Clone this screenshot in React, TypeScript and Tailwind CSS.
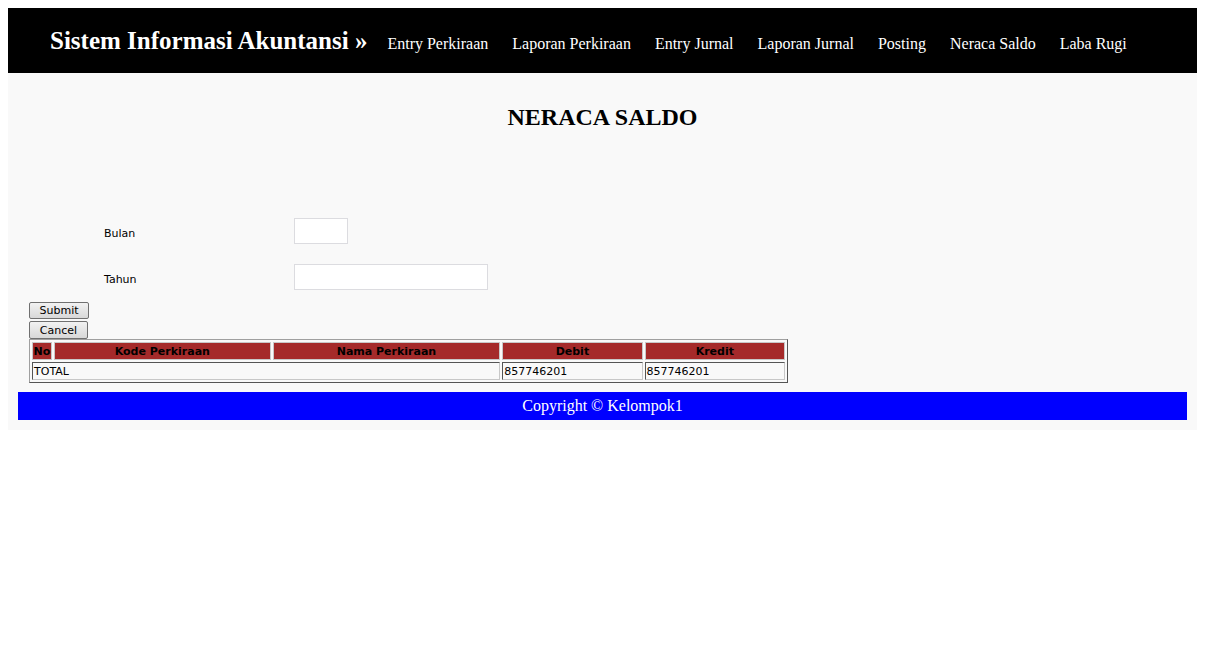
import React from "react";

const nav = ["Entry Perkiraan", "Laporan Perkiraan", "Entry Jurnal", "Laporan Jurnal", "Posting", "Neraca Saldo", "Laba Rugi"];

export default function App() {
  return (
    <div className="bg-white min-h-[654px] p-2" style={{ fontFamily: '"Liberation Serif", serif' }}>
      <div className="bg-[#f9f9f9] pb-[10px]">
        <div className="bg-black h-[65px] flex items-center pl-[42px]">
          <span className="text-white font-bold text-[25px] leading-none mr-2 -mt-[1px]">Sistem Informasi Akuntansi »</span>
          <div className="flex mt-[6px]">
            {nav.map((n) => (
              <span key={n} className="text-white text-[16px] px-3">{n}</span>
            ))}
          </div>
        </div>
        <h1 className="text-center font-bold text-[24px] leading-none pt-[32px] text-black">NERACA SALDO</h1>
        <div className="mt-[89px] text-[11px] text-black" style={{ fontFamily: '"DejaVu Sans", Verdana, sans-serif' }}>
          <div className="flex items-center h-[26px] pl-[96px]">
            <span className="w-[190px] mt-[6px]">Bulan</span>
            <div className="w-[54px] h-[26px] bg-white border border-[#dcdce0]" />
          </div>
          <div className="flex items-center h-[26px] pl-[96px] mt-[20px]">
            <span className="w-[190px] mt-[6px]">Tahun</span>
            <div className="w-[194px] h-[26px] bg-white border border-[#dcdce0]" />
          </div>
          <div className="pl-[21px] mt-[12px] flex flex-col gap-[2px]">
            <button className="w-[60px] h-[17px] border border-[#707070] rounded-[2px] bg-gradient-to-b from-[#f2f2f2] to-[#d8d8d8] text-[11px] leading-none">Submit</button>
            <button className="w-[59px] h-[18px] border border-[#707070] rounded-[2px] bg-gradient-to-b from-[#f2f2f2] to-[#d8d8d8] text-[11px] leading-none">Cancel</button>
          </div>
          <div className="pl-[21px]">
            <table className="border border-t-[#a0a0a0] border-l-[#a0a0a0] border-r-[#555] border-b-[#555] border-separate border-spacing-[2px] w-[759px]">
              <thead>
                <tr className="h-[18px]">
                  {[
                    ["No", "w-[20px]"],
                    ["Kode Perkiraan", "w-[218px]"],
                    ["Nama Perkiraan", "w-[229px]"],
                    ["Debit", "w-[141px]"],
                    ["Kredit", "w-[141px]"],
                  ].map(([t, w]) => (
                    <th key={t} className={`${w} bg-[#a52a2a] border border-[#c8c8c8] font-bold text-[11px] leading-none p-0`}>{t}</th>
                  ))}
                </tr>
              </thead>
              <tbody>
                <tr className="h-[18px]">
                  <td colSpan={3} className="border border-t-[#555] border-l-[#555] border-r-[#c8c8c8] border-b-[#c8c8c8] px-[1px] leading-none">TOTAL</td>
                  <td className="border border-t-[#555] border-l-[#555] border-r-[#c8c8c8] border-b-[#c8c8c8] px-[1px] leading-none">857746201</td>
                  <td className="border border-t-[#555] border-l-[#555] border-r-[#c8c8c8] border-b-[#c8c8c8] px-[1px] leading-none">857746201</td>
                </tr>
              </tbody>
            </table>
          </div>
        </div>
        <div className="mx-[10px] mt-[9px] h-[28px] bg-[#0000ff] text-white text-[16px] flex items-center justify-center">Copyright © Kelompok1</div>
      </div>
    </div>
  );
}
